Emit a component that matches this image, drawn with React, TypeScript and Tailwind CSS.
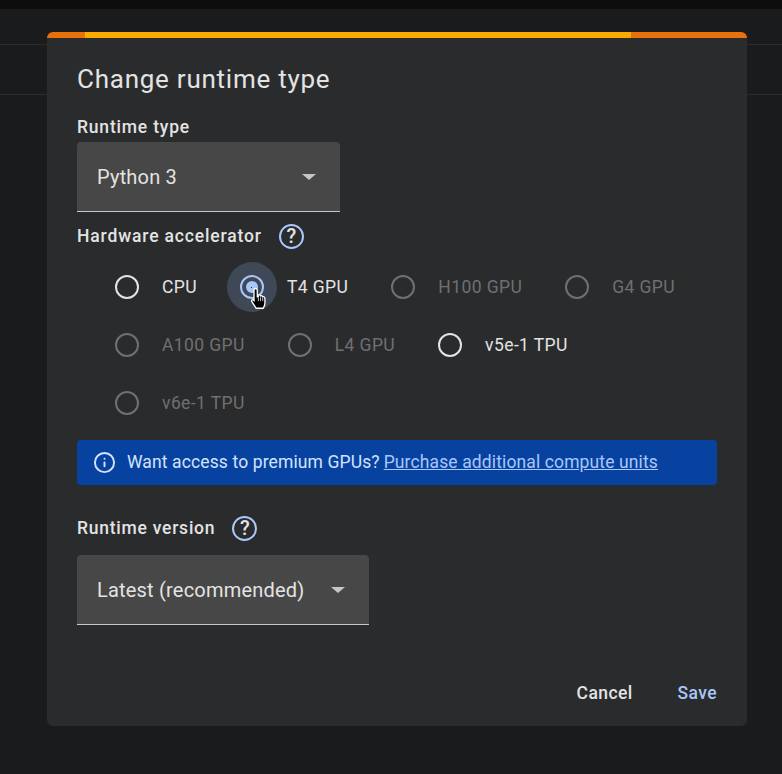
import { Info } from 'lucide-react';

const radios = [
  { label: 'CPU', enabled: true },
  { label: 'T4 GPU', enabled: true, selected: true },
  { label: 'H100 GPU' },
  { label: 'G4 GPU' },
  { label: 'A100 GPU' },
  { label: 'L4 GPU' },
  { label: 'v5e-1 TPU', enabled: true },
  { label: 'v6e-1 TPU' },
];

function HelpIcon() {
  return (
    <div className="w-[25px] h-[25px] rounded-full border-2 border-[#a8c7fa] flex items-center justify-center text-[#e3e3e3] text-[20px] font-medium leading-none">
      ?
    </div>
  );
}

function Select({ value, width }: { value: string; width: string }) {
  return (
    <div className={`${width} h-[70px] bg-[#474747] rounded-t-[4px] border-b border-[#c4c7c5] flex items-center justify-between pl-5 pr-6`}>
      <span className="text-[20px] tracking-[0.2px] text-[#e3e3e3]">{value}</span>
      <div className="w-0 h-0 border-x-[7px] border-x-transparent border-t-[6px] border-t-[#c4c7c5]" />
    </div>
  );
}

function HandCursor() {
  return (
    <svg width="20" height="24" viewBox="0 0 18 22" className="absolute left-[23px] top-[25px]">
      <path
        d="M5 1.5C5.8 1.5 6.5 2.2 6.5 3V9L7.5 8.8V7.5C8.5 7 9.3 7.3 9.5 8.2C10.5 7.8 11.3 8.2 11.5 9C12.5 8.7 13.5 9.2 13.5 10.3V15C13.5 17 12.8 18.2 12 19.5H5.5L1.5 13.5C1 12.6 1.3 11.7 2.2 11.5L3.5 12.5V3C3.5 2.2 4.2 1.5 5 1.5Z"
        fill="#000"
        stroke="#fff"
        strokeWidth="1.2"
      />
      <path d="M7.5 9.5V13M9.5 9.5V13M11.5 10V13" stroke="#fff" strokeWidth="0.7" />
    </svg>
  );
}

function Radio({ label, enabled, selected }: { label: string; enabled?: boolean; selected?: boolean }) {
  return (
    <div className="flex items-center h-[50px]">
      <div className={`relative w-[50px] h-[50px] rounded-full flex items-center justify-center ${selected ? 'bg-[#3e4856]' : ''}`}>
        <div
          className={`w-[24px] h-[24px] rounded-full border-2 flex items-center justify-center ${
            selected ? 'border-[#a8c7fa]' : enabled ? 'border-[#e3e3e3]' : 'border-[#6f7071]'
          }`}
        >
          {selected && (
            <div className="w-[12px] h-[12px] rounded-full bg-[#a8c7fa] flex items-center justify-center">
              <div className="w-[1px] h-[1px] bg-[#1f2a3a]" />
            </div>
          )}
        </div>
        {selected && <HandCursor />}
      </div>
      <span className={`ml-[10px] text-[17.5px] tracking-[0.4px] ${enabled ? 'text-[#e3e3e3]' : 'text-[#6f7071]'}`}>{label}</span>
    </div>
  );
}

export default function App() {
  return (
    <div className="relative w-[782px] h-[774px] bg-[#1a1b1d] overflow-hidden font-['Roboto',sans-serif]">
      {/* Page behind the dialog */}
      <div className="h-[9px] bg-[#0d0d0e]" />
      <div className="h-[36px] border-b border-[#2b2c2d]" />
      <div className="h-[50px] border-b border-[#2b2c2d]" />

      {/* Dialog */}
      <div className="absolute left-[47px] top-[32px] w-[700px] h-[694px] bg-[#2a2b2d] rounded-[6px] overflow-hidden">
        <div className="flex h-[6px]">
          <div className="w-[38px] bg-[#e8710a]" />
          <div className="flex-1 bg-[#fbab00]" />
          <div className="w-[116px] bg-[#e8710a]" />
        </div>

        <div className="px-[30px]">
          <h1 className="mt-[25px] text-[26px] leading-[32px] tracking-[0.75px] text-[#e3e3e3]">Change runtime type</h1>

          <div className="mt-[20px] text-[17.5px] leading-[24px] font-medium tracking-[0.8px] text-[#e3e3e3]">Runtime type</div>
          <div className="mt-[3px]">
            <Select value="Python 3" width="w-[263px]" />
          </div>

          <div className="mt-[11px] flex items-center gap-[17px] h-[26px]">
            <span className="text-[17.5px] font-medium tracking-[0.85px] text-[#e3e3e3]">Hardware accelerator</span>
            <HelpIcon />
          </div>

          <div className="mt-[13px] pl-[25px] flex flex-wrap gap-x-[30px] gap-y-[8px] h-[172px] content-start">
            {radios.map((r) => (
              <Radio key={r.label} {...r} />
            ))}
          </div>

          <div className="mt-[6px] h-[45px] rounded-[4px] bg-[#0842a0] flex items-center pl-[16px] text-[17.5px] tracking-[0.12px] text-[#d3e3fd]">
            <Info size={23} strokeWidth={2} className="text-[#d3e3fd] mr-[11px]" />
            <span>Want access to premium GPUs?</span>
            <span className="ml-[4px] text-[#a8c7fa] underline">Purchase additional compute units</span>
          </div>

          <div className="mt-[30px] flex items-center gap-[17px] h-[26px]">
            <span className="text-[17.5px] font-medium tracking-[0.75px] text-[#e3e3e3]">Runtime version</span>
            <HelpIcon />
          </div>
          <div className="mt-[14px]">
            <Select value="Latest (recommended)" width="w-[292px]" />
          </div>

          <div className="mt-[55px] flex justify-end gap-[45px] text-[17.5px] tracking-[0.4px] font-medium">
            <span className="text-[#e3e3e3]">Cancel</span>
            <span className="text-[#a8c7fa]">Save</span>
          </div>
        </div>
      </div>
    </div>
  );
}
